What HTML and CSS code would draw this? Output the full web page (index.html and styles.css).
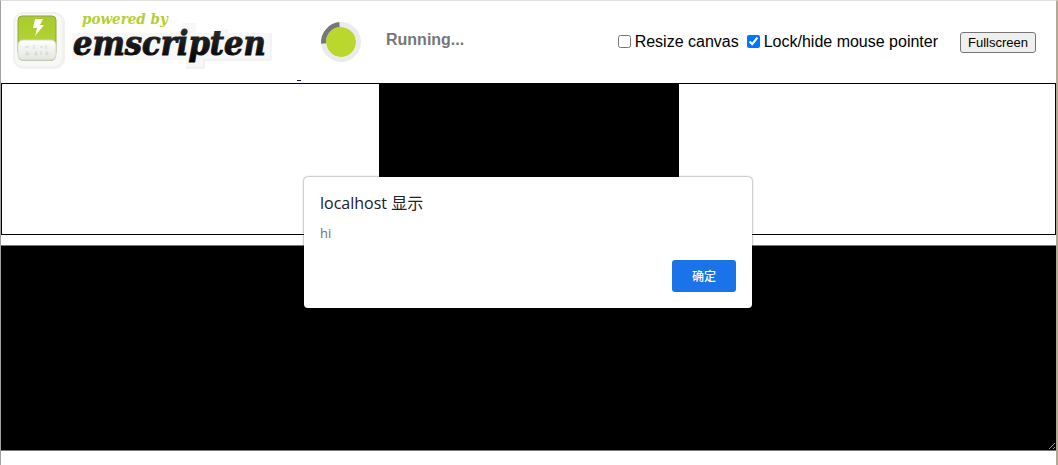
FILE: index.html
```
<!DOCTYPE html>
<html lang="en-us">
<head>
    <meta charset="utf-8">
    <meta name="viewport" content="width=device-width, initial-scale=1.0">
    <title>Emscripten-Generated Code</title>
    <link rel="stylesheet" href="styles.css">
</head>
<body>
    <header class="header">
        <a class="logo" href="http://emscripten.org" aria-label="powered by emscripten">
            <svg width="296" height="76" viewBox="0 0 296 76">
                <defs>
                    <linearGradient id="green" x1="0" y1="0" x2="0" y2="1">
                        <stop offset="0" stop-color="#a8cb2a"/>
                        <stop offset="1" stop-color="#b9d63c"/>
                    </linearGradient>
                    <linearGradient id="plate" x1="0" y1="0" x2="0" y2="1">
                        <stop offset="0" stop-color="#ffffff"/>
                        <stop offset="1" stop-color="#e2e5de"/>
                    </linearGradient>
                    <linearGradient id="ink" x1="0" y1="0" x2="0" y2="1">
                        <stop offset="0" stop-color="#333333"/>
                        <stop offset="1" stop-color="#000000"/>
                    </linearGradient>
                </defs>
                <rect x="12" y="12" width="52" height="57" rx="11" fill="#f1f1ef"/>
                <rect x="14" y="14" width="47" height="52" rx="8" fill="#f8f8f6"/>
                <rect x="17" y="16" width="38" height="40" rx="4" fill="url(#green)" stroke="#8fa54a"/>
                <path d="M34 19h8l-3 6h4l-9 11 2-8h-4z" fill="#ffffff"/>
                <rect x="17" y="41" width="38" height="20" rx="5" fill="#aeb59f"/>
                <rect x="17" y="40" width="38" height="20" rx="5" fill="url(#plate)" stroke="#d5d9ce"/>
                <path d="M24 47h4M33 45v4M39 47h3M45 45v4M24 54h5M26 51v5M33 54h4M35 51v5M40 51v4M44 54h4M46 51v4" fill="none" stroke="#d3d6ce"/>
                <path d="M71 33h110V23h14v10h21v-4h11v4h43v27h-67v8h-18v-8H71z" fill="#f7f7f7"/>
                <path d="M270 33v27h-67v8h-18" fill="none" stroke="#e9e9e9"/>
                <text class="logo-small" x="81" y="24">powered by</text>
                <text class="logo-name" x="72" y="55" fill="url(#ink)" stroke="url(#ink)">emscripten</text>
            </svg></a>

        <div class="spinner"></div>
        <div class="status" id="status">Running...</div>

        <div class="controls">
            <label><input type="checkbox" id="resize">Resize canvas</label>
            <label><input type="checkbox" id="pointerLock" checked>Lock/hide mouse pointer</label>
            <button class="fullscreen" type="button">Fullscreen</button>
        </div>
    </header>

    <div class="canvas-border">
        <canvas class="canvas" id="canvas"></canvas>
    </div>
    <textarea class="output" id="output" aria-label="Output"></textarea>

    <div class="dialog" role="alertdialog" aria-labelledby="dialogTitle" aria-describedby="dialogText">
        <h1 class="dialog-title" id="dialogTitle">localhost 显示</h1>
        <p class="dialog-text" id="dialogText">hi</p>
        <div class="dialog-actions">
            <button class="ok-btn" type="button">确定</button>
        </div>
    </div>
</body>
</html>
```
FILE: styles.css
```
* {
    box-sizing: border-box;
}
html {
    height: 100%;
}
body {
    min-height: 100%;
    margin: 0;
    font-family: "Liberation Sans", Arial, sans-serif;
    font-size: 16px;
    background-color: #fff;
    border-top: 1px solid #e4e1e1;
    border-left: 1px solid #a0a0a0;
    border-right: 2px solid #b5a890;
}
.header {
    display: flex;
    align-items: center;
    height: 82px;
    padding-right: 20px;
}
.logo {
    display: block;
    align-self: flex-start;
    width: 300px;
    color: #1a1a50;
    text-decoration: none;
}
.logo svg {
    display: block;
    margin-top: -1px;
}
.logo::after {
    content: "";
    display: block;
    width: 4px;
    height: 1px;
    margin: 4px 0 0 296px;
    background-color: #1a1a50;
}
.logo-small {
    font: italic bold 15px "DejaVu Serif Condensed", "DejaVu Serif", serif;
    fill: #b5cf32;
}
.logo-name {
    font: italic bold 34px "DejaVu Serif Condensed", "DejaVu Serif", serif;
    stroke-width: 1px;
}
.spinner {
    width: 40px;
    height: 40px;
    margin-left: 20px;
    border: 5px solid #ebebeb;
    border-left-color: #777;
    border-radius: 50%;
    background-color: #bad72d;
    background-clip: padding-box;
    transform: rotate(40deg);
}
.status {
    margin-left: 25px;
    padding-bottom: 4px;
    font-weight: bold;
    color: #777;
}
.controls {
    display: flex;
    align-items: center;
    gap: 8px;
    margin-left: auto;
}
.controls label {
    display: flex;
    align-items: center;
}
.controls input {
    width: 13px;
    height: 13px;
    margin: 0 4px 2px 0;
}
.fullscreen {
    height: 21px;
    margin-left: 14px;
    padding: 1px 7px;
    border: 1px solid #767676;
    border-radius: 3px;
    font: 13px "Liberation Sans", Arial, sans-serif;
    color: #000;
    background-color: #efefef;
}
.canvas-border {
    border: 1px solid #000;
}
.canvas {
    display: block;
    width: 300px;
    height: 150px;
    margin: 0 auto;
    background-color: #000;
}
.output {
    display: block;
    width: 100%;
    height: 206px;
    margin: 10px 0 0;
    padding: 0;
    border: 0 solid #767676;
    border-width: 1px 0;
    color: #fff;
    background-color: #000;
    font-family: "Liberation Mono", monospace;
}
/* alert box lies over the page */
.dialog {
    position: absolute;
    top: 177px;
    left: 50%;
    width: 448px;
    padding: 16px;
    transform: translateX(-50%);
    margin-left: -1px;
    border-radius: 4px;
    background-color: #fff;
    box-shadow: 0 0 2px rgba(0, 0, 0, 0.7);
    font-family: "Open Sans", "Noto Sans CJK SC", sans-serif;
}
.dialog-title {
    margin: 0 0 10px;
    font-size: 16px;
    font-weight: normal;
    line-height: 20px;
    color: #202124;
}
.dialog-text {
    margin: 0;
    font-size: 13px;
    line-height: 20px;
    color: #6b6f74;
}
.dialog-actions {
    display: flex;
    justify-content: flex-end;
    margin-top: 17px;
}
.ok-btn {
    width: 64px;
    height: 32px;
    padding: 0 0 2px;
    border: none;
    border-radius: 3px;
    font: 500 12px "Noto Sans CJK SC", sans-serif;
    color: #fff;
    background-color: #1a73e8;
}
```
